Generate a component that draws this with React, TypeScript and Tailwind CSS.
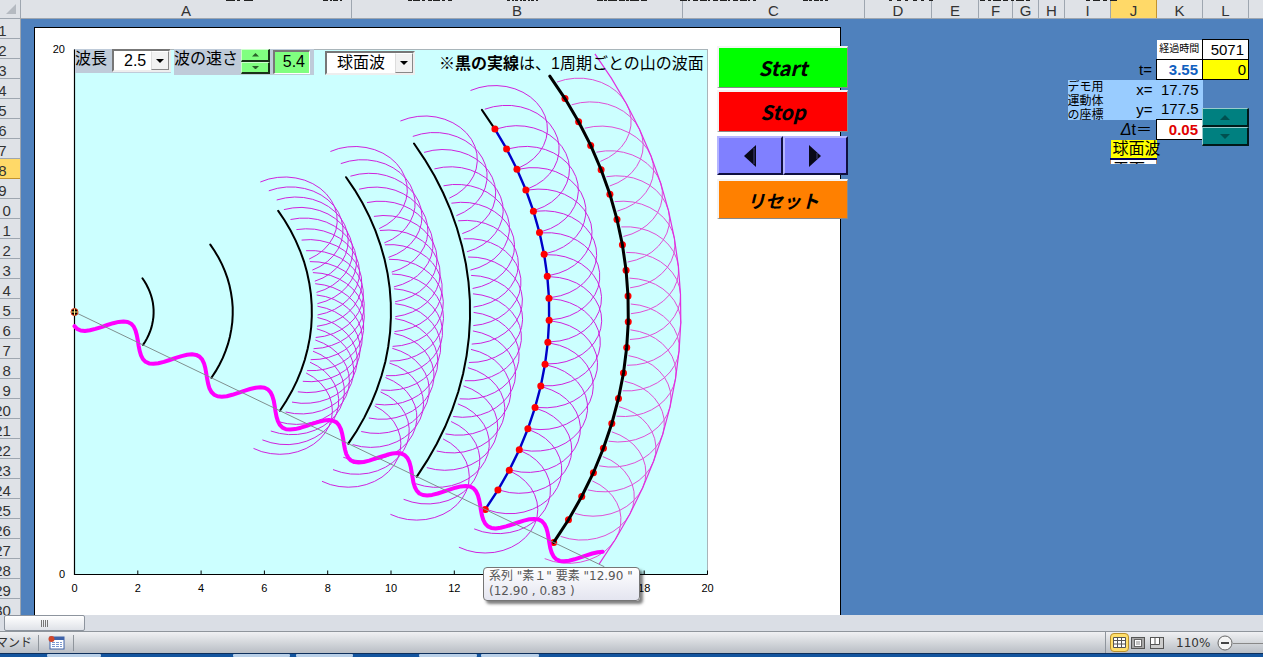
import { useState } from "react";

type Point = [number, number];

// Chart geometry: data runs 0..20 on both axes, the source sits at (0, 10)
const CHART_W = 682;
const CHART_H = 588;
const LEFT = 39.5;
const TOP = 21.5;
const UNIT_X = 31.65;
const UNIT_Y = 26.25;
const BOTTOM = TOP + 20 * UNIT_Y;
const RIGHT = LEFT + 20 * UNIT_X;

const WAVELENGTH = 2.5;
const WAVELET_R = 1.66;
const START_DEG = -30.1;
const STEP_DEG = 3.21;
const POINTS = 20;

const COLUMNS = [
  { name: "A", width: "w-[331px]" },
  { name: "B", width: "w-[331px]" },
  { name: "C", width: "w-[182px]" },
  { name: "D", width: "w-[67px]" },
  { name: "E", width: "w-[47px]" },
  { name: "F", width: "w-[34px]" },
  { name: "G", width: "w-[26px]" },
  { name: "H", width: "w-[26px]" },
  { name: "I", width: "w-[46px]" },
  { name: "J", width: "w-[46px]", active: true },
  { name: "K", width: "w-[46px]" },
  { name: "L", width: "w-[46px]" },
];

const ROWS = Array.from({ length: 30 }, (_, i) => i + 1);
const ACTIVE_ROW = 8;

const TASKS: Point[] = [
  [47, 54],
  [233, 57],
  [296, 57],
  [419, 58],
  [481, 58],
];

const RIBBON_BITS: [number, number, string][] = [
  [226, 27, "9 2 3 4"],
  [323, 20, "5 2 2 1"],
  [408, 44, "4 1 7 2 3 3"],
  [507, 32, "3 2 2 1"],
  [597, 50, "6 1 3 1 9 2"],
  [680, 76, "7 1 2 3 5 2"],
  [803, 25, "5 1 3 2"],
  [889, 46, "3 5 4 4"],
  [980, 50, "5 3 3 2 8 2"],
  [1086, 32, "4 3 7 3"],
];

const rad = (deg: number) => (deg * Math.PI) / 180;

function toPx(x: number, y: number): Point {
  return [LEFT + x * UNIT_X, TOP + (20 - y) * UNIT_Y];
}

function polar(r: number, deg: number): Point {
  return [r * Math.cos(rad(deg)), 10 + r * Math.sin(rad(deg))];
}

function path(points: Point[]) {
  return points.map(([x, y]) => `${x.toFixed(1)},${y.toFixed(1)}`).join(" ");
}

function rowLabel(r: number) {
  return r >= 10 && r < 20 ? `\u2007${r % 10}` : `${r}`;
}

function front(r: number, from = 0, to = POINTS - 1): Point[] {
  const out: Point[] = [];
  for (let k = from; k <= to; k++) {
    const [x, y] = polar(r, START_DEG + k * STEP_DEG);
    out.push(toPx(x, y));
  }
  return out;
}

// Half circle around point k of a wave front, facing away from the source
function wavelet(r: number, k: number): Point[] {
  const deg = START_DEG + k * STEP_DEG;
  const [cx, cy] = polar(r, deg);
  const out: Point[] = [];
  for (let a = -90; a <= 90; a += 10) {
    out.push(
      toPx(
        cx + WAVELET_R * Math.cos(rad(deg + a)),
        cy + WAVELET_R * Math.sin(rad(deg + a))
      )
    );
  }
  return out;
}

function wave(): Point[] {
  const out: Point[] = [];
  const dir = rad(START_DEG);
  for (let s = 0.27; s <= 19.04; s += 0.125) {
    const h = 0.52 * Math.sin((2 * Math.PI * (s - 1.075)) / WAVELENGTH);
    out.push(
      toPx(
        s * Math.cos(dir) - h * Math.sin(dir),
        10 + s * Math.sin(dir) + h * Math.cos(dir)
      )
    );
  }
  return out;
}

function WaveChart() {
  const ticks = Array.from({ length: 11 }, (_, i) => i * 2);
  // the tooltip lies over these two
  const labels = ticks.filter((t) => t !== 14 && t !== 16);
  const [sx, sy] = toPx(0, 10);
  const [ex, ey] = toPx(...polar(19.35, START_DEG));

  return (
    <svg
      width={CHART_W}
      height={CHART_H}
      viewBox={`0 0 ${CHART_W} ${CHART_H}`}
      className="block shrink-0"
      role="img"
      aria-label="球面波"
    >
      <rect x={LEFT} y={TOP} width={RIGHT - LEFT} height={BOTTOM - TOP} fill="#ccffff" stroke="#a9b5ba" />
      <path d={`M${LEFT} ${TOP}V${BOTTOM}H${RIGHT}`} fill="none" stroke="#000" strokeWidth="1.2" />

      {ticks.map((t) => (
        <path key={t} d={`M${toPx(t, 0)[0]} ${BOTTOM}v-4`} stroke="#000" />
      ))}
      {labels.map((t) => (
        <text key={t} x={toPx(t, 0)[0]} y={BOTTOM + 17} textAnchor="middle" className="text-[11px]">
          {t}
        </text>
      ))}
      <text x="30" y="25" textAnchor="end" className="text-[11px]">20</text>
      <text x="30" y="550" textAnchor="end" className="text-[11px]">0</text>

      {/* Elementary waves */}
      <g fill="none" stroke="#cf22dd" strokeWidth="1">
        {[7.5, 10, 12.5, 15].map((r) =>
          Array.from({ length: 19 }, (_, k) => (
            <polyline key={`${r}-${k}`} points={path(wavelet(r, k))} />
          ))
        )}
      </g>
      <g fill="none" stroke="#e04fd6" strokeWidth="1">
        {Array.from({ length: 17 }, (_, k) => (
          <polyline key={k} points={path(wavelet(17.5, k + 1))} />
        ))}
        <polyline points={path(front(17.5 + WAVELET_R))} stroke="#e030e0" strokeWidth="1.2" />
      </g>

      {/* Wave fronts, one per period */}
      <g fill="none" stroke="#000" strokeWidth="2" strokeLinecap="round">
        {[2.5, 5, 7.5, 10, 12.5].map((r) => (
          <polyline key={r} points={path(front(r))} />
        ))}
        <polyline points={path(front(15, 18, 19))} />
        <polyline points={path(front(15, 0, 18))} stroke="#0000c8" strokeWidth="2.4" />
      </g>
      {front(17.5, 0, 18).map(([x, y]) => (
        <circle key={y} cx={x} cy={y} r="3.5" fill="#f00" />
      ))}
      <polyline points={path(front(17.5))} fill="none" stroke="#000" strokeWidth="3" strokeLinecap="round" />
      {front(15, 0, 18).map(([x, y]) => (
        <circle key={y} cx={x} cy={y} r="3.5" fill="#f00" />
      ))}

      <polyline points={path(wave())} fill="none" stroke="#ff00ff" strokeWidth="4" strokeLinejoin="round" strokeLinecap="round" />
      <path d={`M${sx} ${sy}L${ex} ${ey}`} stroke="#7f8f8f" />

      {/* Source */}
      <circle cx={sx} cy={sy} r="3.5" fill="#000" stroke="#e03010" />
      <path d={`M${sx - 3.5} ${sy}h7M${sx} ${sy - 3.5}v7`} stroke="#ffe680" />
    </svg>
  );
}

function Combo({ label, options, className }: { label: string; options: string[]; className: string }) {
  return (
    <div className={`relative border-2 border-t-[#777] border-l-[#777] border-r-[#eee] border-b-[#eee] bg-white ${className}`}>
      <select aria-label={label} className="block h-full w-full appearance-none bg-white pl-2.5 text-base leading-5 outline-none">
        {options.map((o) => (
          <option key={o}>{o}</option>
        ))}
      </select>
      <span className="pointer-events-none absolute inset-y-0 right-0 flex w-[18px] items-center justify-center border border-t-white border-l-[#ddd] border-r-[#888] border-b-[#888] bg-[#f2f2f2]">
        <svg width="8" height="4" viewBox="0 0 8 4">
          <path d="M0 0h8L4 4z" />
        </svg>
      </span>
    </div>
  );
}

function Spinner({
  label,
  className,
  arrow,
  onStep,
}: {
  label: string;
  className: string;
  arrow: string;
  onStep: (d: number) => void;
}) {
  return (
    <div className={`flex flex-col ${className}`}>
      {[1, -1].map((d) => (
        <button
          key={d}
          aria-label={`${label} ${d > 0 ? "+" : "-"}`}
          onClick={() => onStep(d)}
          className="flex flex-1 items-center justify-center border-t border-l border-r-2 border-b-2 border-t-white/60 border-l-white/60 border-r-black/80 border-b-black/80"
        >
          <svg viewBox="0 0 10 5" className={arrow}>
            <path d={d > 0 ? "M0 5h10L5 0z" : "M0 0h10L5 5z"} fill="currentColor" />
          </svg>
        </button>
      ))}
    </div>
  );
}

function ChartControls({ speed, setSpeed }: { speed: number; setSpeed: (n: number) => void }) {
  return (
    <div className="absolute top-[21px] left-10 flex items-start text-base leading-5">
      <div className="flex h-6 bg-[#bfcbd9]">
        <span className="w-[37px]">波長</span>
        <Combo label="波長" options={["2.5", "2.0", "5.0"]} className="h-[23px] w-[59px]" />
      </div>
      <div className="ml-[3px] flex h-[26px] bg-[#bfcbd9]">
        <span className="w-[67px]">波の速さ</span>
        <Spinner
          label="波の速さ"
          className="h-[25px] w-[29px] bg-[#80ff80]"
          arrow="w-[7px] text-[#2a602a]"
          onStep={(d) => setSpeed(Math.round((speed + d * 0.1) * 10) / 10)}
        />
        <output className="mt-px ml-[3px] h-6 w-[37px] border border-t-2 border-l-2 border-t-[#777] border-l-[#777] border-white bg-[#80ff80] pr-1 text-right">
          {speed.toFixed(1)}
        </output>
        <span className="w-1" />
      </div>
      <Combo label="波の種類" options={["球面波", "平面波"]} className="mt-0.5 ml-[11px] h-6 w-[90px]" />
      <p className="mt-[5px] ml-6 whitespace-nowrap">
        ※<b>黒の実線</b>は、1周期ごとの山の波面
      </p>
    </div>
  );
}

function MacroButtons() {
  const base =
    "border-t-2 border-l-2 border-r border-b border-t-[#f4f4f4] border-l-[#f4f4f4] border-r-[#888] border-b-[#888] font-['Noto_Sans_CJK_JP',sans-serif] leading-6 font-bold italic";
  const arrowBase =
    "flex flex-1 items-center justify-center border-t-2 border-l-2 border-r-2 border-b-2 border-t-[#b4b4ff] border-l-[#b4b4ff] border-r-[#101040] border-b-[#101040] bg-[#8080ff]";
  return (
    <div className="z-10 -mr-2 flex w-[131px] shrink-0 flex-col pt-[18px]">
      <button className={`h-[42px] bg-[#00ff00] text-xl ${base}`}>Start</button>
      <button className={`mt-0.5 h-[42px] bg-[#ff0000] text-xl ${base}`}>Stop</button>
      <div className="mt-1 flex h-[39px]">
        <button className={arrowBase} aria-label="戻る">
          <svg width="12" height="22" viewBox="0 0 12 22">
            <path d="M12 0v22L0 11z" fill="#080818" />
            <path d="M10 3v16" stroke="#404080" />
          </svg>
        </button>
        <button className={arrowBase} aria-label="進む">
          <svg width="12" height="22" viewBox="0 0 12 22">
            <path d="M0 0v22l12-11z" fill="#080818" />
            <path d="M8 8v6" stroke="#404080" />
          </svg>
        </button>
      </div>
      <button className={`mt-1 h-10 bg-[#ff8000] text-lg ${base}`}>リセット</button>
    </div>
  );
}

function ValueTable() {
  const [dt, setDt] = useState(0.05);
  const boxed = "border border-black bg-white pr-1";
  return (
    <div className="relative mt-5 mr-3.5 ml-auto">
      <table className="w-[181px] table-fixed border-collapse text-right text-[15px] leading-[18px]">
        <colgroup>
          <col className="w-[43px]" />
          <col className="w-[46px]" />
          <col className="w-[46px]" />
          <col className="w-[46px]" />
        </colgroup>
        <tbody>
          <tr className="h-5">
            <td />
            <td />
            <td className="bg-white p-0 text-center text-[10px] whitespace-nowrap">経過時間</td>
            <td className={boxed}>5071</td>
          </tr>
          <tr className="h-5">
            <td />
            <td className="pr-1">t=</td>
            <td className={`${boxed} font-bold text-[#1060c0]`}>3.55</td>
            <td className="border border-black bg-[#ffff00] pr-0.5">0</td>
          </tr>
          <tr className="h-5 bg-[#99ccff]">
            <td rowSpan={2} className="p-0 text-left align-middle text-xs leading-[14px]">
              <div className="h-10 overflow-hidden">
                デモ用
                <br />
                運動体
                <br />
                の座標
              </div>
            </td>
            <td className="pr-1">x=</td>
            <td className="pr-1">17.75</td>
            <td className="bg-[#4f81bd]" />
          </tr>
          <tr className="h-5 bg-[#99ccff]">
            <td className="pr-1">y=</td>
            <td className="pr-1">177.5</td>
            <td className="bg-[#4f81bd]" />
          </tr>
          <tr className="h-5">
            <td />
            <td className="pr-1 text-base leading-[18px] whitespace-nowrap">
              <i>Δ</i>t＝
            </td>
            <td className={`${boxed} font-bold text-[#e00000]`}>{dt.toFixed(2)}</td>
            <td />
          </tr>
          <tr className="h-[19px]">
            <td />
            <td className="bg-[#ffff00] p-0 pl-0.5 text-left text-base leading-[18px] whitespace-nowrap">球面波</td>
            <td />
            <td />
          </tr>
          <tr>
            <td />
            <td className="border-x border-t-2 border-x-[#b08060] border-t-[#000060] bg-white p-0">
              <div className="h-1 overflow-hidden pl-0.5 text-left text-base leading-5">平面波</div>
            </td>
            <td />
            <td />
          </tr>
        </tbody>
      </table>
      <div className="absolute top-[69px] right-0">
        <Spinner
          label="Δt"
          className="h-[38px] w-[47px] bg-[#008080]"
          arrow="w-2.5 text-[#005050]"
          onStep={(d) => setDt(Math.max(0, dt + d * 0.01))}
        />
      </div>
    </div>
  );
}

function StatusBar() {
  return (
    <footer className="flex h-[22px] shrink-0 items-center border-t border-[#8f959c] bg-linear-to-b from-[#f0f1f3] to-[#b9bec5] font-['DejaVu_Sans','Noto_Sans_CJK_JP',sans-serif] text-xs leading-4 text-[#333]">
      <span className="-ml-4 w-[55px] border-r border-[#8f959c] pr-2 text-right whitespace-nowrap">コマンド</span>
      <button aria-label="マクロの記録" className="flex w-[35px] justify-center border-r border-[#8f959c]">
        <svg width="17" height="16" viewBox="0 0 17 16">
          <rect x="2" y="2" width="14" height="12" fill="#fff" stroke="#3f62a8" />
          <path d="M2 3.5h14" stroke="#3f62a8" strokeWidth="3" />
          <path d="M4 7.5h10M4 9.5h10M4 11.5h10" stroke="#7b98cf" strokeDasharray="3 1" />
          <circle cx="3.5" cy="4" r="3" fill="#d0462a" />
        </svg>
      </button>
      <div className="ml-auto flex h-full items-center border-l border-[#8f959c] pl-1">
        <button aria-label="標準" className="flex size-[19px] items-center justify-center rounded-sm border border-[#b98f2c] bg-[#ffdf6b]">
          <svg width="13" height="11" viewBox="0 0 13 11">
            <path d="M.5.5h12v10H.5zM.5 3.5h12M.5 7h12M4.5.5v10M8.5.5v10" fill="#fff" stroke="#555" />
          </svg>
        </button>
        <button aria-label="ページ レイアウト" className="ml-0.5">
          <svg width="14" height="12" viewBox="0 0 14 12" className="block">
            <rect x=".5" y=".5" width="13" height="11" fill="#a8a8a8" stroke="#555" />
            <rect x="3.5" y="2.5" width="7" height="7" fill="#fff" stroke="#666" />
            <path d="M5 5h4M5 7h4" stroke="#888" />
          </svg>
        </button>
        <button aria-label="改ページ プレビュー" className="ml-[5px]">
          <svg width="14" height="12" viewBox="0 0 14 12" className="block">
            <rect x=".5" y=".5" width="13" height="11" fill="#ccc" stroke="#555" />
            <path d="M1 1h8v6H1z" fill="#fff" />
            <path d="M1 7.5h8.5V1M5 1v6" fill="none" stroke="#555" />
          </svg>
        </button>
        <span className="ml-3 w-[41px]">110%</span>
        <label className="flex items-center">
          <svg width="46" height="16" viewBox="0 0 46 16" className="block">
            <path d="M16 8.5h30" stroke="#888" />
            <circle cx="8" cy="8" r="7" fill="#f4f4f4" stroke="#666" />
            <path d="M4 8h8" stroke="#444" strokeWidth="2" />
          </svg>
          <input type="range" aria-label="ズーム" defaultValue={110} min={10} max={400} className="sr-only" />
        </label>
      </div>
    </footer>
  );
}

export default function App() {
  const [speed, setSpeed] = useState(5.4);

  return (
    <div className="flex h-screen flex-col overflow-hidden bg-[#4f81bd] font-['Liberation_Sans','Noto_Sans_CJK_JP',sans-serif] text-black">
      {/* Column headings */}
      <div className="relative flex h-[19px] shrink-0 border-b border-[#9ea6b0] bg-[#dfe2e7] text-[15px] leading-[21px] text-[#333]">
        <div className="flex w-[21px] shrink-0 items-end justify-end border-r border-[#9ea6b0] p-1">
          <svg width="10" height="10" viewBox="0 0 10 10" className="shrink-0">
            <path d="M10 0v10H0z" fill="#b5bac1" />
          </svg>
        </div>
        {COLUMNS.map((c) => (
          <div
            key={c.name}
            className={`shrink-0 border-r text-center ${c.width} ${
              c.active ? "border-[#c2922e] bg-[#ffd968]" : "border-[#9ea6b0]"
            }`}
          >
            {c.name}
          </div>
        ))}
        <svg height="2" className="absolute top-0 left-0 w-full">
          {RIBBON_BITS.map(([x, w, dash]) => (
            <path key={x} d={`M${x} .5h${w}`} stroke="#222" strokeDasharray={dash} />
          ))}
        </svg>
      </div>

      <div className="flex min-h-0 flex-1 overflow-hidden">
        {/* Row headings */}
        <div className="w-[21px] shrink-0 overflow-hidden border-r border-[#9ea6b0] bg-[#dfe2e7] text-[15px] leading-[23px] text-[#333]">
          {ROWS.map((r) => (
            <div
              key={r}
              className={`-ml-4 h-5 w-[37px] border-b text-center whitespace-pre ${
                r === ACTIVE_ROW ? "border-[#c2922e] bg-[#ffd968]" : "border-[#9ea6b0]"
              }`}
            >
              {rowLabel(r)}
            </div>
          ))}
        </div>

        <main className="flex min-w-0 flex-1 items-start">
          <section className="relative mt-2 ml-[13px] flex w-[807px] shrink-0 border border-black bg-white">
            <WaveChart />
            <MacroButtons />
            <ChartControls speed={speed} setSpeed={setSpeed} />
            <div
              role="tooltip"
              className="absolute top-[539px] left-[448px] rounded-sm border border-[#767676] bg-linear-to-b from-white to-[#e4e5f0] py-px pr-1.5 pl-[5px] font-['DejaVu_Sans','Noto_Sans_CJK_JP',sans-serif] text-xs leading-[15px] whitespace-nowrap text-[#575757] shadow-[3px_3px_3px_rgba(0,0,0,0.5)]"
            >
              系列 "素１" 要素 "12.90 "
              <br />
              (12.90 , 0.83 )
            </div>
          </section>
          <ValueTable />
        </main>
      </div>

      {/* Horizontal scroll bar */}
      <div className="h-4 shrink-0 bg-[#dadee5] pl-1">
        <div className="flex h-4 w-[81px] items-center justify-center gap-px rounded-xs border border-[#8d949e] bg-linear-to-b from-white to-[#dfe2e8]">
          {[0, 1, 2, 3].map((i) => (
            <span key={i} className="h-[7px] w-px bg-[#777]" />
          ))}
        </div>
      </div>

      <StatusBar />

      {/* Top edge of the taskbar */}
      <svg height="4" className="block w-full shrink-0 bg-[#14559f]">
        <path d="M0 .5h3000" stroke="#0d2f5c" />
        {TASKS.map(([x, w]) => (
          <rect key={x} x={x} y="1" width={w} height="3" rx="1" fill="#b9d0e8" />
        ))}
      </svg>
    </div>
  );
}
